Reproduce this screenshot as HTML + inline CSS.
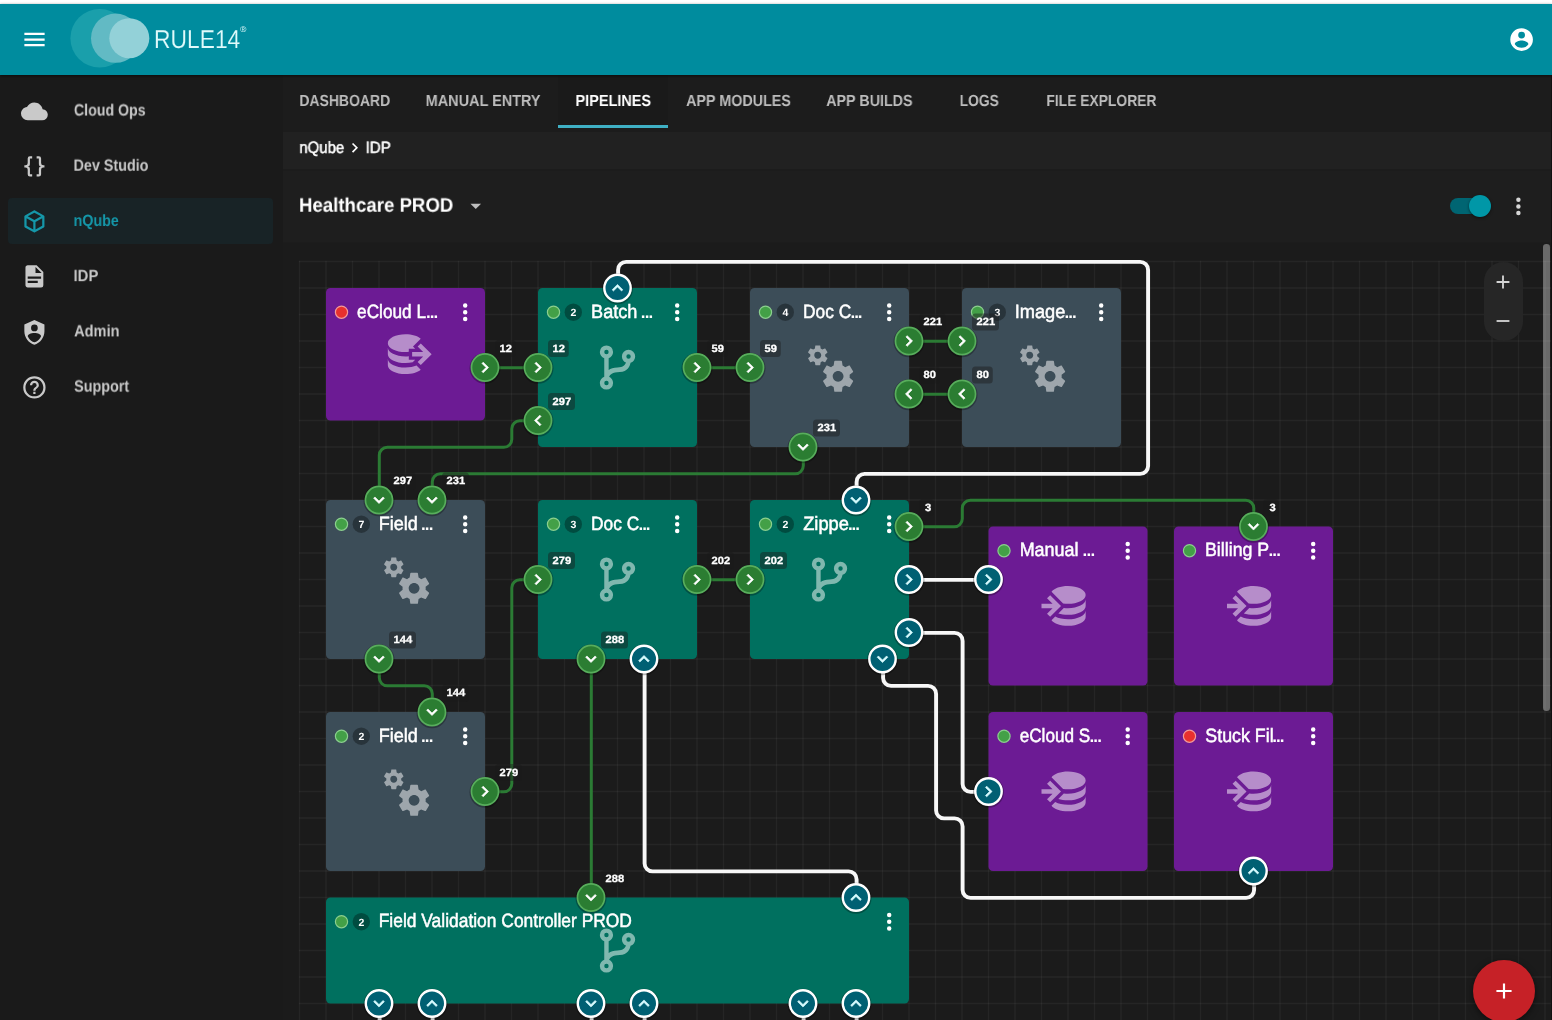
<!DOCTYPE html>
<html lang="en">
<head>
<meta charset="utf-8">
<title>RULE14 - nQube IDP Pipelines - Healthcare PROD</title>
<style>
html,body{margin:0;padding:0}
body{width:1552px;height:1020px;overflow:hidden;background:#fff;position:relative;font-family:"Liberation Sans",Arial,sans-serif;text-rendering:geometricPrecision;}
svg text{text-rendering:geometricPrecision}
*{box-sizing:border-box}
ul{list-style:none;margin:0;padding:0}
h1{margin:0}
.abs,.t,.ic{position:absolute}
.t{left:0;top:0;white-space:nowrap;transform-origin:0 0;display:block;will-change:transform}
.ic{display:block;overflow:visible;will-change:transform}
#app{position:absolute;left:0;top:0;width:1552px;height:1020px;overflow:hidden}
.topbar{left:0;top:4px;width:1552px;height:70.5px;background:#008c9e;box-shadow:0 1px 3px rgba(0,0,0,.6)}
.side-bg{left:0;top:74.5px;width:282.5px;height:945.5px;background:#1a1a1a}
.main-bg{left:282.5px;top:74.5px;width:1269.5px;height:945.5px;background:#1c1c1c}
.cv{position:absolute;left:282px;top:243px;will-change:transform}
header .abs,header .ic{z-index:6}
header .topbar{z-index:5}
</style>
</head>
<body>
<div id="app">
<aside>
<div class="abs side-bg"></div>
<nav aria-label="Main navigation"><ul>
<li>
<svg class="ic" style="left:20.9px;top:97.7px" width="26.8" height="26.8" viewBox="0 0 24 24" ><path fill="#c9c9c9" d="M19.35,10.03C18.67,6.59 15.64,4 12,4C9.11,4 6.6,5.64 5.35,8.03C2.34,8.36 0,10.9 0,14A6,6 0 0,0 6,20H19A5,5 0 0,0 24,15C24,12.36 21.95,10.22 19.35,10.03Z"/></svg>
<span class="t " style="font-size:16.4px;line-height:16.4px;color:#c9c9c9;font-weight:700;transform:translate(73.93px,102.52px) scaleX(0.8641);">Cloud Ops</span>
</li>
<li>
<svg class="ic" style="left:20.9px;top:152.92px" width="26.8" height="26.8" viewBox="0 0 24 24" ><path fill="#c9c9c9" d="M8,3A2,2 0 0,0 6,5V9A2,2 0 0,1 4,11H3V13H4A2,2 0 0,1 6,15V19A2,2 0 0,0 8,21H10V19H8V14A2,2 0 0,0 6,12A2,2 0 0,0 8,10V5H10V3M16,3A2,2 0 0,1 18,5V9A2,2 0 0,0 20,11H21V13H20A2,2 0 0,0 18,15V19A2,2 0 0,1 16,21H14V19H16V14A2,2 0 0,1 18,12A2,2 0 0,1 16,10V5H14V3H16Z"/></svg>
<span class="t " style="font-size:16.4px;line-height:16.4px;color:#c9c9c9;font-weight:700;transform:translate(73.57px,157.74px) scaleX(0.8750);">Dev Studio</span>
</li>
<li>
<div class="abs" style="left:7.7px;top:198px;width:265px;height:46.3px;border-radius:4px;background:#182326"></div>
<svg class="ic" style="left:20.9px;top:208.14px" width="26.8" height="26.8" viewBox="0 0 24 24" ><path fill="#1597a9" d="M21,16.5C21,16.88 20.79,17.21 20.47,17.38L12.57,21.82C12.41,21.94 12.21,22 12,22C11.79,22 11.59,21.94 11.43,21.82L3.53,17.38C3.21,17.21 3,16.88 3,16.5V7.5C3,7.12 3.21,6.79 3.53,6.62L11.43,2.18C11.59,2.06 11.79,2 12,2C12.21,2 12.41,2.06 12.57,2.18L20.47,6.62C20.79,6.79 21,7.12 21,7.5V16.5M12,4.15L6.04,7.5L12,10.85L17.96,7.5L12,4.15M5,15.91L11,19.29V12.58L5,9.21V15.91M19,15.91V9.21L13,12.58V19.29L19,15.91Z"/></svg>
<span class="t " style="font-size:16.4px;line-height:16.4px;color:#1597a9;font-weight:700;transform:translate(73.57px,212.96px) scaleX(0.8714);">nQube</span>
</li>
<li>
<svg class="ic" style="left:20.9px;top:263.36px" width="26.8" height="26.8" viewBox="0 0 24 24" ><path fill="#c9c9c9" d="M13,9H18.5L13,3.5V9M6,2H14L20,8V20A2,2 0 0,1 18,22H6C4.89,22 4,21.1 4,20V4C4,2.89 4.89,2 6,2M15,18V16H6V18H15M18,14V12H6V14H18Z"/></svg>
<span class="t " style="font-size:16.4px;line-height:16.4px;color:#c9c9c9;font-weight:700;transform:translate(73.54px,268.18px) scaleX(0.9049);">IDP</span>
</li>
<li>
<svg class="ic" style="left:20.9px;top:318.58px" width="26.8" height="26.8" viewBox="0 0 24 24" ><path fill="#c9c9c9" d="M12,1L3,5V11C3,16.55 6.84,21.74 12,23C17.16,21.74 21,16.55 21,11V5L12,1M12,5A3,3 0 0,1 15,8A3,3 0 0,1 12,11A3,3 0 0,1 9,8A3,3 0 0,1 12,5M17.13,17C15.92,18.85 14.11,20.24 12,20.92C9.89,20.24 8.08,18.85 6.87,17C6.53,16.5 6.24,16 6,15.47C6,13.82 8.71,12.47 12,12.47C15.29,12.47 18,13.79 18,15.47C17.76,16 17.47,16.5 17.13,17Z"/></svg>
<span class="t " style="font-size:16.4px;line-height:16.4px;color:#c9c9c9;font-weight:700;transform:translate(74.14px,323.4px) scaleX(0.8889);">Admin</span>
</li>
<li>
<svg class="ic" style="left:20.9px;top:373.8px" width="26.8" height="26.8" viewBox="0 0 24 24" ><path fill="#c9c9c9" d="M11,18H13V16H11V18M12,2A10,10 0 0,0 2,12A10,10 0 0,0 12,22A10,10 0 0,0 22,12A10,10 0 0,0 12,2M12,20C7.59,20 4,16.41 4,12C4,7.59 7.59,4 12,4C16.41,4 20,7.59 20,12C20,16.41 16.41,20 12,20M12,6A4,4 0 0,0 8,10H10A2,2 0 0,1 12,8A2,2 0 0,1 14,10C14,12 11,11.75 11,15H13C13,12.75 16,12.5 16,10A4,4 0 0,0 12,6Z"/></svg>
<span class="t " style="font-size:16.4px;line-height:16.4px;color:#c9c9c9;font-weight:700;transform:translate(74.07px,378.62px) scaleX(0.8768);">Support</span>
</li>
</ul></nav>
</aside>
<main>
<div class="abs main-bg"></div>
<nav aria-label="Sections">
<div class="abs" style="left:557.8px;top:74.5px;width:110.6px;height:53.7px;background:#1a1a1a"></div>
<div class="abs" style="left:557.8px;top:124.9px;width:110.6px;height:3.3px;background:#3fb0c4"></div>
<ul>
<li><span class="t " style="font-size:16.1px;line-height:16.1px;color:#bdbdbd;font-weight:700;transform:translate(299.39px,92.97px) scaleX(0.8683);">DASHBOARD</span></li>
<li><span class="t " style="font-size:16.1px;line-height:16.1px;color:#bdbdbd;font-weight:700;transform:translate(425.66px,92.97px) scaleX(0.8987);">MANUAL ENTRY</span></li>
<li><span class="t " style="font-size:16.1px;line-height:16.1px;color:#ffffff;font-weight:700;transform:translate(575.46px,92.97px) scaleX(0.9001);">PIPELINES</span></li>
<li><span class="t " style="font-size:16.1px;line-height:16.1px;color:#bdbdbd;font-weight:700;transform:translate(686.14px,92.97px) scaleX(0.8895);">APP MODULES</span></li>
<li><span class="t " style="font-size:16.1px;line-height:16.1px;color:#bdbdbd;font-weight:700;transform:translate(826.24px,92.97px) scaleX(0.8878);">APP BUILDS</span></li>
<li><span class="t " style="font-size:16.1px;line-height:16.1px;color:#bdbdbd;font-weight:700;transform:translate(959.7px,92.97px) scaleX(0.8600);">LOGS</span></li>
<li><span class="t " style="font-size:16.1px;line-height:16.1px;color:#bdbdbd;font-weight:700;transform:translate(1046.4px,92.97px) scaleX(0.8606);">FILE EXPLORER</span></li>
</ul></nav>
<div class="breadcrumb">
<div class="abs" style="left:282.5px;top:132px;width:1269.5px;height:37.3px;background:#212121"></div>
<span class="t " style="font-size:16.4px;line-height:16.4px;color:#fff;transform:translate(299.33px,139.92px) scaleX(0.9136);-webkit-text-stroke:0.5px #fff;">nQube</span>
<svg class="ic" style="left:344.65px;top:137.85px" width="19.5" height="19.5" viewBox="0 0 24 24" ><path fill="#fff" d="M8.59,16.58L13.17,12L8.59,7.41L10,6L16,12L10,18L8.59,16.58Z"/></svg>
<span class="t " style="font-size:16.4px;line-height:16.4px;color:#fff;transform:translate(365.64px,139.92px) scaleX(0.9196);-webkit-text-stroke:0.5px #fff;">IDP</span>
</div>
<section class="titlebar">
<div class="abs" style="left:282.5px;top:170.8px;width:1269.5px;height:71.7px;background:#1e1e1e"></div>
<h1 class="t " style="font-size:19.8px;line-height:19.8px;color:#fff;font-weight:700;transform:translate(298.99px,196.74px) scaleX(0.9421);">Healthcare PROD</h1>
<svg class="ic" style="left:462.85px;top:193.25px" width="25.5" height="25.5" viewBox="0 0 24 24" ><path fill="#bdbdbd" d="M7,10L12,15L17,10H7Z"/></svg>
<div class="abs" style="left:1450px;top:198.2px;width:38px;height:15.9px;border-radius:8px;background:#006572"></div>
<div class="abs" style="left:1469.1px;top:195.1px;width:22px;height:22px;border-radius:11px;background:#0097a7;box-shadow:0 1px 3px rgba(0,0,0,.5)"></div>
<svg class="ic" style="left:1505.3px;top:192.7px" width="26.8" height="26.8" viewBox="0 0 24 24" ><path fill="#d6d6d6" d="M12,16A2,2 0 0,1 14,18A2,2 0 0,1 12,20A2,2 0 0,1 10,18A2,2 0 0,1 12,16M12,10A2,2 0 0,1 14,12A2,2 0 0,1 12,14A2,2 0 0,1 10,12A2,2 0 0,1 12,10M12,4A2,2 0 0,1 14,6A2,2 0 0,1 12,8A2,2 0 0,1 10,6A2,2 0 0,1 12,4Z"/></svg>
</section>
<section class="canvas">
<div class="abs" style="left:282.5px;top:242.5px;width:1269.5px;height:777.5px;background:#1b1b1b"></div>
<svg class="cv" width="1270" height="777" viewBox="282 243 1270 777" font-family="'Liberation Sans', Arial, sans-serif">
<path fill="none" stroke="rgba(255,255,255,0.047)" stroke-width="1.4" d="M299.5 260.8V1021M326 260.8V1021M352.5 260.8V1021M379 260.8V1021M405.5 260.8V1021M432 260.8V1021M458.5 260.8V1021M485 260.8V1021M511.5 260.8V1021M538 260.8V1021M564.5 260.8V1021M591 260.8V1021M617.5 260.8V1021M644 260.8V1021M670.5 260.8V1021M697 260.8V1021M723.5 260.8V1021M750 260.8V1021M776.5 260.8V1021M803 260.8V1021M829.5 260.8V1021M856 260.8V1021M882.5 260.8V1021M909 260.8V1021M935.5 260.8V1021M962 260.8V1021M988.5 260.8V1021M1015 260.8V1021M1041.5 260.8V1021M1068 260.8V1021M1094.5 260.8V1021M1121 260.8V1021M1147.5 260.8V1021M1174 260.8V1021M1200.5 260.8V1021M1227 260.8V1021M1253.5 260.8V1021M1280 260.8V1021M1306.5 260.8V1021M1333 260.8V1021M1359.5 260.8V1021M1386 260.8V1021M1412.5 260.8V1021M1439 260.8V1021M1465.5 260.8V1021M1492 260.8V1021M1518.5 260.8V1021M1545 260.8V1021"/>
<path fill="none" stroke="rgba(255,255,255,0.047)" stroke-width="1.4" d="M298.8 261.5H1552M298.8 288H1552M298.8 314.5H1552M298.8 341H1552M298.8 367.5H1552M298.8 394H1552M298.8 420.5H1552M298.8 447H1552M298.8 473.5H1552M298.8 500H1552M298.8 526.5H1552M298.8 553H1552M298.8 579.5H1552M298.8 606H1552M298.8 632.5H1552M298.8 659H1552M298.8 685.5H1552M298.8 712H1552M298.8 738.5H1552M298.8 765H1552M298.8 791.5H1552M298.8 818H1552M298.8 844.5H1552M298.8 871H1552M298.8 897.5H1552M298.8 924H1552M298.8 950.5H1552M298.8 977H1552M298.8 1003.5H1552"/>
<g fill="none" stroke="#2b7b34" stroke-width="3" transform="translate(0.3 0.3)">
<path d="M485 367.5L538 367.5"/>
<path d="M697 367.5L750 367.5"/>
<path d="M909 341L962 341"/>
<path d="M909 394L962 394"/>
<path d="M538 420.5L519.5 420.5A8 8 0 0 0 511.5 428.5L511.5 439A8 8 0 0 1 503.5 447L387 447A8 8 0 0 0 379 455L379 500"/>
<path d="M803 447L803 465.5A8 8 0 0 1 795 473.5L440 473.5A8 8 0 0 0 432 481.5L432 500"/>
<path d="M379 659L379 677.5A8 8 0 0 0 387 685.5L424 685.5A8 8 0 0 1 432 693.5L432 712"/>
<path d="M485 791.5L503.5 791.5A8 8 0 0 0 511.5 783.5L511.5 587.5A8 8 0 0 1 519.5 579.5L538 579.5"/>
<path d="M697 579.5L750 579.5"/>
<path d="M591 659L591 897.5"/>
<path d="M909 526.5L954 526.5A8 8 0 0 0 962 518.5L962 508A8 8 0 0 1 970 500L1245.5 500A8 8 0 0 1 1253.5 508L1253.5 526.5"/>
</g>
<g fill="none" stroke="#f7f7f7" stroke-width="3.9" transform="translate(0.6 0.4)">
<path d="M617.5 288L617.5 269.5A8 8 0 0 1 625.5 261.5L1139.5 261.5A8 8 0 0 1 1147.5 269.5L1147.5 465.5A8 8 0 0 1 1139.5 473.5L864 473.5A8 8 0 0 0 856 481.5L856 500"/>
<path d="M644 659L644 863A8 8 0 0 0 652 871L848 871A8 8 0 0 1 856 879L856 897.5"/>
<path d="M909 579.5L988.5 579.5"/>
<path d="M909 632.5L954 632.5A8 8 0 0 1 962 640.5L962 783.5A8 8 0 0 0 970 791.5L988.5 791.5"/>
<path d="M882.5 659L882.5 677.5A8 8 0 0 0 890.5 685.5L927.5 685.5A8 8 0 0 1 935.5 693.5L935.5 810A8 8 0 0 0 943.5 818L954 818A8 8 0 0 1 962 826L962 889.5A8 8 0 0 0 970 897.5L1245.5 897.5A8 8 0 0 0 1253.5 889.5L1253.5 871"/>
<path d="M379 1003.5L379 1056.5"/>
<path d="M432 1003.5L432 1056.5"/>
<path d="M591 1003.5L591 1056.5"/>
<path d="M644 1003.5L644 1056.5"/>
<path d="M803 1003.5L803 1056.5"/>
<path d="M856 1003.5L856 1056.5"/>
</g>
<g>
<rect x="326" y="288" width="159" height="132.5" rx="4.5" fill="#6c1b94"/>
<path transform="translate(379 327.75) scale(2.2083)" fill="rgba(255,255,255,0.5)" d="M12,3C7.58,3 4,4.79 4,7C4,9.21 7.58,11 12,11C12.5,11 13,10.97 13.5,10.92V9.5H16.39L15.39,8.5L18.9,5C17.5,3.8 14.94,3 12,3M18.92,7.08L17.5,8.5L20,11H15V13H20L17.5,15.5L18.92,16.92L23.84,12L18.92,7.08M4,9V12C4,14.21 7.58,16 12,16C13.17,16 14.26,15.85 15.25,15.63L16.38,14.5H13.5V12.92C13,12.97 12.5,13 12,13C7.58,13 4,11.21 4,9M4,14V17C4,19.21 7.58,21 12,21C14.94,21 17.5,20.2 18.9,19L17,17.1C15.61,17.66 13.9,18 12,18C7.58,18 4,16.21 4,14Z"/>
<circle cx="341.5" cy="312.2" r="6.1" fill="#e8302e" stroke="#f59a98" stroke-width="1.2"/>
<text x="357.12" y="317.8" font-size="19.2" fill="#fff" textLength="68.94" lengthAdjust="spacingAndGlyphs" stroke="#fff" stroke-width="0.5">eCloud L</text>
<text x="425.91" y="317.8" font-size="17" font-weight="700" fill="#fff" letter-spacing="-0.96">...</text>
<path transform="translate(451.8 298.8) scale(1.1167)" fill="#fff" d="M12,16A2,2 0 0,1 14,18A2,2 0 0,1 12,20A2,2 0 0,1 10,18A2,2 0 0,1 12,16M12,10A2,2 0 0,1 14,12A2,2 0 0,1 12,14A2,2 0 0,1 10,12A2,2 0 0,1 12,10M12,4A2,2 0 0,1 14,6A2,2 0 0,1 12,8A2,2 0 0,1 10,6A2,2 0 0,1 12,4Z"/>
</g>
<g>
<rect x="538" y="288" width="159" height="159" rx="4.5" fill="#00705f"/>
<path transform="translate(591 341) scale(2.2083)" fill="rgba(255,255,255,0.5)" d="M13,14C9.64,14 8.54,15.35 8.18,16.24C9.25,16.7 10,17.76 10,19A3,3 0 0,1 7,22A3,3 0 0,1 4,19C4,17.69 4.83,16.58 6,16.17V7.83C4.83,7.42 4,6.31 4,5A3,3 0 0,1 7,2A3,3 0 0,1 10,5C10,6.31 9.17,7.42 8,7.83V13.12C8.88,12.47 10.16,12 12,12C14.67,12 15.56,10.66 15.85,9.77C14.77,9.32 14,8.25 14,7A3,3 0 0,1 17,4A3,3 0 0,1 20,7C20,8.34 19.12,9.5 17.91,9.86C17.65,11.29 16.68,14 13,14M7,18A1,1 0 0,0 6,19A1,1 0 0,0 7,20A1,1 0 0,0 8,19A1,1 0 0,0 7,18M7,4A1,1 0 0,0 6,5A1,1 0 0,0 7,6A1,1 0 0,0 8,5A1,1 0 0,0 7,4M17,6A1,1 0 0,0 16,7A1,1 0 0,0 17,8A1,1 0 0,0 18,7A1,1 0 0,0 17,6Z"/>
<circle cx="553.5" cy="312.2" r="6.1" fill="#43a047" stroke="#8bcf8e" stroke-width="1.2"/>
<circle cx="573.3" cy="312.2" r="8.7" fill="rgba(0,0,0,0.32)"/>
<text x="573.3" y="316.1" font-size="10.5" fill="#fff" font-weight="700" text-anchor="middle" >2</text>
<text x="591.05" y="317.8" font-size="19.2" fill="#fff" textLength="46.37" lengthAdjust="spacingAndGlyphs" stroke="#fff" stroke-width="0.5">Batch</text>
<text x="640.81" y="317.8" font-size="17" font-weight="700" fill="#fff" letter-spacing="-0.86">...</text>
<path transform="translate(663.8 298.8) scale(1.1167)" fill="#fff" d="M12,16A2,2 0 0,1 14,18A2,2 0 0,1 12,20A2,2 0 0,1 10,18A2,2 0 0,1 12,16M12,10A2,2 0 0,1 14,12A2,2 0 0,1 12,14A2,2 0 0,1 10,12A2,2 0 0,1 12,10M12,4A2,2 0 0,1 14,6A2,2 0 0,1 12,8A2,2 0 0,1 10,6A2,2 0 0,1 12,4Z"/>
</g>
<g>
<rect x="750" y="288" width="159" height="159" rx="4.5" fill="#3c4d58"/>
<path transform="translate(803 341) scale(2.2083)" fill="rgba(255,255,255,0.5)" d="M15.9,18.45C17.25,18.45 18.35,17.35 18.35,16C18.35,14.65 17.25,13.55 15.9,13.55C14.54,13.55 13.45,14.65 13.45,16C13.45,17.35 14.54,18.45 15.9,18.45M21.1,16.68L22.58,17.84C22.71,17.95 22.75,18.13 22.66,18.29L21.26,20.71C21.17,20.86 21,20.92 20.83,20.86L19.09,20.16C18.73,20.44 18.33,20.67 17.91,20.85L17.64,22.7C17.62,22.87 17.47,23 17.3,23H14.5C14.32,23 14.18,22.87 14.15,22.7L13.89,20.85C13.46,20.67 13.07,20.44 12.71,20.16L10.96,20.86C10.81,20.92 10.62,20.86 10.54,20.71L9.14,18.29C9.05,18.13 9.09,17.95 9.22,17.84L10.7,16.68L10.65,16L10.7,15.31L9.22,14.16C9.09,14.05 9.05,13.86 9.14,13.71L10.54,11.29C10.62,11.13 10.81,11.07 10.96,11.13L12.71,11.84C13.07,11.56 13.46,11.32 13.89,11.15L14.15,9.29C14.18,9.13 14.32,9 14.5,9H17.3C17.47,9 17.62,9.13 17.64,9.29L17.91,11.15C18.33,11.32 18.73,11.56 19.09,11.84L20.83,11.13C21,11.07 21.17,11.13 21.26,11.29L22.66,13.71C22.75,13.86 22.71,14.05 22.58,14.16L21.1,15.31L21.15,16L21.1,16.68M6.69,8.07C7.56,8.07 8.26,7.37 8.26,6.5C8.26,5.63 7.56,4.92 6.69,4.92A1.58,1.58 0 0,0 5.11,6.5C5.11,7.37 5.82,8.07 6.69,8.07M10.03,6.94L11,7.68C11.07,7.75 11.09,7.87 11.03,7.97L10.13,9.53C10.08,9.63 9.96,9.67 9.86,9.63L8.74,9.18L8,9.62L7.81,10.81C7.79,10.92 7.7,11 7.59,11H5.79C5.67,11 5.58,10.92 5.56,10.81L5.4,9.62L4.64,9.18L3.5,9.63C3.41,9.67 3.3,9.63 3.24,9.53L2.34,7.97C2.28,7.87 2.31,7.75 2.39,7.68L3.34,6.94L3.31,6.5L3.34,6.06L2.39,5.32C2.31,5.25 2.28,5.13 2.34,5.03L3.24,3.47C3.3,3.37 3.41,3.33 3.5,3.37L4.63,3.82L5.4,3.38L5.56,2.19C5.58,2.08 5.67,2 5.79,2H7.59C7.7,2 7.79,2.08 7.81,2.19L8,3.38L8.74,3.82L9.86,3.37C9.96,3.33 10.08,3.37 10.13,3.47L11.03,5.03C11.09,5.13 11.07,5.25 11,5.32L10.03,6.06L10.06,6.5L10.03,6.94Z"/>
<circle cx="765.5" cy="312.2" r="6.1" fill="#43a047" stroke="#8bcf8e" stroke-width="1.2"/>
<circle cx="785.3" cy="312.2" r="8.7" fill="rgba(0,0,0,0.32)"/>
<text x="785.3" y="316.1" font-size="10.5" fill="#fff" font-weight="700" text-anchor="middle" >4</text>
<text x="803.01" y="317.8" font-size="19.2" fill="#fff" textLength="48.14" lengthAdjust="spacingAndGlyphs" stroke="#fff" stroke-width="0.5">Doc C</text>
<text x="850.51" y="317.8" font-size="17" font-weight="700" fill="#fff" letter-spacing="-1.06">...</text>
<path transform="translate(875.8 298.8) scale(1.1167)" fill="#fff" d="M12,16A2,2 0 0,1 14,18A2,2 0 0,1 12,20A2,2 0 0,1 10,18A2,2 0 0,1 12,16M12,10A2,2 0 0,1 14,12A2,2 0 0,1 12,14A2,2 0 0,1 10,12A2,2 0 0,1 12,10M12,4A2,2 0 0,1 14,6A2,2 0 0,1 12,8A2,2 0 0,1 10,6A2,2 0 0,1 12,4Z"/>
</g>
<g>
<rect x="962" y="288" width="159" height="159" rx="4.5" fill="#3c4d58"/>
<path transform="translate(1015 341) scale(2.2083)" fill="rgba(255,255,255,0.5)" d="M15.9,18.45C17.25,18.45 18.35,17.35 18.35,16C18.35,14.65 17.25,13.55 15.9,13.55C14.54,13.55 13.45,14.65 13.45,16C13.45,17.35 14.54,18.45 15.9,18.45M21.1,16.68L22.58,17.84C22.71,17.95 22.75,18.13 22.66,18.29L21.26,20.71C21.17,20.86 21,20.92 20.83,20.86L19.09,20.16C18.73,20.44 18.33,20.67 17.91,20.85L17.64,22.7C17.62,22.87 17.47,23 17.3,23H14.5C14.32,23 14.18,22.87 14.15,22.7L13.89,20.85C13.46,20.67 13.07,20.44 12.71,20.16L10.96,20.86C10.81,20.92 10.62,20.86 10.54,20.71L9.14,18.29C9.05,18.13 9.09,17.95 9.22,17.84L10.7,16.68L10.65,16L10.7,15.31L9.22,14.16C9.09,14.05 9.05,13.86 9.14,13.71L10.54,11.29C10.62,11.13 10.81,11.07 10.96,11.13L12.71,11.84C13.07,11.56 13.46,11.32 13.89,11.15L14.15,9.29C14.18,9.13 14.32,9 14.5,9H17.3C17.47,9 17.62,9.13 17.64,9.29L17.91,11.15C18.33,11.32 18.73,11.56 19.09,11.84L20.83,11.13C21,11.07 21.17,11.13 21.26,11.29L22.66,13.71C22.75,13.86 22.71,14.05 22.58,14.16L21.1,15.31L21.15,16L21.1,16.68M6.69,8.07C7.56,8.07 8.26,7.37 8.26,6.5C8.26,5.63 7.56,4.92 6.69,4.92A1.58,1.58 0 0,0 5.11,6.5C5.11,7.37 5.82,8.07 6.69,8.07M10.03,6.94L11,7.68C11.07,7.75 11.09,7.87 11.03,7.97L10.13,9.53C10.08,9.63 9.96,9.67 9.86,9.63L8.74,9.18L8,9.62L7.81,10.81C7.79,10.92 7.7,11 7.59,11H5.79C5.67,11 5.58,10.92 5.56,10.81L5.4,9.62L4.64,9.18L3.5,9.63C3.41,9.67 3.3,9.63 3.24,9.53L2.34,7.97C2.28,7.87 2.31,7.75 2.39,7.68L3.34,6.94L3.31,6.5L3.34,6.06L2.39,5.32C2.31,5.25 2.28,5.13 2.34,5.03L3.24,3.47C3.3,3.37 3.41,3.33 3.5,3.37L4.63,3.82L5.4,3.38L5.56,2.19C5.58,2.08 5.67,2 5.79,2H7.59C7.7,2 7.79,2.08 7.81,2.19L8,3.38L8.74,3.82L9.86,3.37C9.96,3.33 10.08,3.37 10.13,3.47L11.03,5.03C11.09,5.13 11.07,5.25 11,5.32L10.03,6.06L10.06,6.5L10.03,6.94Z"/>
<circle cx="977.5" cy="312.2" r="6.1" fill="#43a047" stroke="#8bcf8e" stroke-width="1.2"/>
<circle cx="997.3" cy="312.2" r="8.7" fill="rgba(0,0,0,0.32)"/>
<text x="997.3" y="316.1" font-size="10.5" fill="#fff" font-weight="700" text-anchor="middle" >3</text>
<text x="1014.66" y="317.8" font-size="19.2" fill="#fff" textLength="50.65" lengthAdjust="spacingAndGlyphs" stroke="#fff" stroke-width="0.5">Image</text>
<text x="1064.61" y="317.8" font-size="17" font-weight="700" fill="#fff" letter-spacing="-1.01">...</text>
<path transform="translate(1087.8 298.8) scale(1.1167)" fill="#fff" d="M12,16A2,2 0 0,1 14,18A2,2 0 0,1 12,20A2,2 0 0,1 10,18A2,2 0 0,1 12,16M12,10A2,2 0 0,1 14,12A2,2 0 0,1 12,14A2,2 0 0,1 10,12A2,2 0 0,1 12,10M12,4A2,2 0 0,1 14,6A2,2 0 0,1 12,8A2,2 0 0,1 10,6A2,2 0 0,1 12,4Z"/>
</g>
<g>
<rect x="326" y="500" width="159" height="159" rx="4.5" fill="#3c4d58"/>
<path transform="translate(379 553) scale(2.2083)" fill="rgba(255,255,255,0.5)" d="M15.9,18.45C17.25,18.45 18.35,17.35 18.35,16C18.35,14.65 17.25,13.55 15.9,13.55C14.54,13.55 13.45,14.65 13.45,16C13.45,17.35 14.54,18.45 15.9,18.45M21.1,16.68L22.58,17.84C22.71,17.95 22.75,18.13 22.66,18.29L21.26,20.71C21.17,20.86 21,20.92 20.83,20.86L19.09,20.16C18.73,20.44 18.33,20.67 17.91,20.85L17.64,22.7C17.62,22.87 17.47,23 17.3,23H14.5C14.32,23 14.18,22.87 14.15,22.7L13.89,20.85C13.46,20.67 13.07,20.44 12.71,20.16L10.96,20.86C10.81,20.92 10.62,20.86 10.54,20.71L9.14,18.29C9.05,18.13 9.09,17.95 9.22,17.84L10.7,16.68L10.65,16L10.7,15.31L9.22,14.16C9.09,14.05 9.05,13.86 9.14,13.71L10.54,11.29C10.62,11.13 10.81,11.07 10.96,11.13L12.71,11.84C13.07,11.56 13.46,11.32 13.89,11.15L14.15,9.29C14.18,9.13 14.32,9 14.5,9H17.3C17.47,9 17.62,9.13 17.64,9.29L17.91,11.15C18.33,11.32 18.73,11.56 19.09,11.84L20.83,11.13C21,11.07 21.17,11.13 21.26,11.29L22.66,13.71C22.75,13.86 22.71,14.05 22.58,14.16L21.1,15.31L21.15,16L21.1,16.68M6.69,8.07C7.56,8.07 8.26,7.37 8.26,6.5C8.26,5.63 7.56,4.92 6.69,4.92A1.58,1.58 0 0,0 5.11,6.5C5.11,7.37 5.82,8.07 6.69,8.07M10.03,6.94L11,7.68C11.07,7.75 11.09,7.87 11.03,7.97L10.13,9.53C10.08,9.63 9.96,9.67 9.86,9.63L8.74,9.18L8,9.62L7.81,10.81C7.79,10.92 7.7,11 7.59,11H5.79C5.67,11 5.58,10.92 5.56,10.81L5.4,9.62L4.64,9.18L3.5,9.63C3.41,9.67 3.3,9.63 3.24,9.53L2.34,7.97C2.28,7.87 2.31,7.75 2.39,7.68L3.34,6.94L3.31,6.5L3.34,6.06L2.39,5.32C2.31,5.25 2.28,5.13 2.34,5.03L3.24,3.47C3.3,3.37 3.41,3.33 3.5,3.37L4.63,3.82L5.4,3.38L5.56,2.19C5.58,2.08 5.67,2 5.79,2H7.59C7.7,2 7.79,2.08 7.81,2.19L8,3.38L8.74,3.82L9.86,3.37C9.96,3.33 10.08,3.37 10.13,3.47L11.03,5.03C11.09,5.13 11.07,5.25 11,5.32L10.03,6.06L10.06,6.5L10.03,6.94Z"/>
<circle cx="341.5" cy="524.2" r="6.1" fill="#43a047" stroke="#8bcf8e" stroke-width="1.2"/>
<circle cx="361.3" cy="524.2" r="8.7" fill="rgba(0,0,0,0.32)"/>
<text x="361.3" y="528.1" font-size="10.5" fill="#fff" font-weight="700" text-anchor="middle" >7</text>
<text x="378.65" y="529.8" font-size="19.2" fill="#fff" textLength="39.17" lengthAdjust="spacingAndGlyphs" stroke="#fff" stroke-width="0.5">Field</text>
<text x="420.91" y="529.8" font-size="17" font-weight="700" fill="#fff" letter-spacing="-0.81">...</text>
<path transform="translate(451.8 510.8) scale(1.1167)" fill="#fff" d="M12,16A2,2 0 0,1 14,18A2,2 0 0,1 12,20A2,2 0 0,1 10,18A2,2 0 0,1 12,16M12,10A2,2 0 0,1 14,12A2,2 0 0,1 12,14A2,2 0 0,1 10,12A2,2 0 0,1 12,10M12,4A2,2 0 0,1 14,6A2,2 0 0,1 12,8A2,2 0 0,1 10,6A2,2 0 0,1 12,4Z"/>
</g>
<g>
<rect x="538" y="500" width="159" height="159" rx="4.5" fill="#00705f"/>
<path transform="translate(591 553) scale(2.2083)" fill="rgba(255,255,255,0.5)" d="M13,14C9.64,14 8.54,15.35 8.18,16.24C9.25,16.7 10,17.76 10,19A3,3 0 0,1 7,22A3,3 0 0,1 4,19C4,17.69 4.83,16.58 6,16.17V7.83C4.83,7.42 4,6.31 4,5A3,3 0 0,1 7,2A3,3 0 0,1 10,5C10,6.31 9.17,7.42 8,7.83V13.12C8.88,12.47 10.16,12 12,12C14.67,12 15.56,10.66 15.85,9.77C14.77,9.32 14,8.25 14,7A3,3 0 0,1 17,4A3,3 0 0,1 20,7C20,8.34 19.12,9.5 17.91,9.86C17.65,11.29 16.68,14 13,14M7,18A1,1 0 0,0 6,19A1,1 0 0,0 7,20A1,1 0 0,0 8,19A1,1 0 0,0 7,18M7,4A1,1 0 0,0 6,5A1,1 0 0,0 7,6A1,1 0 0,0 8,5A1,1 0 0,0 7,4M17,6A1,1 0 0,0 16,7A1,1 0 0,0 17,8A1,1 0 0,0 18,7A1,1 0 0,0 17,6Z"/>
<circle cx="553.5" cy="524.2" r="6.1" fill="#43a047" stroke="#8bcf8e" stroke-width="1.2"/>
<circle cx="573.3" cy="524.2" r="8.7" fill="rgba(0,0,0,0.32)"/>
<text x="573.3" y="528.1" font-size="10.5" fill="#fff" font-weight="700" text-anchor="middle" >3</text>
<text x="591.01" y="529.8" font-size="19.2" fill="#fff" textLength="48.14" lengthAdjust="spacingAndGlyphs" stroke="#fff" stroke-width="0.5">Doc C</text>
<text x="638.51" y="529.8" font-size="17" font-weight="700" fill="#fff" letter-spacing="-1.06">...</text>
<path transform="translate(663.8 510.8) scale(1.1167)" fill="#fff" d="M12,16A2,2 0 0,1 14,18A2,2 0 0,1 12,20A2,2 0 0,1 10,18A2,2 0 0,1 12,16M12,10A2,2 0 0,1 14,12A2,2 0 0,1 12,14A2,2 0 0,1 10,12A2,2 0 0,1 12,10M12,4A2,2 0 0,1 14,6A2,2 0 0,1 12,8A2,2 0 0,1 10,6A2,2 0 0,1 12,4Z"/>
</g>
<g>
<rect x="750" y="500" width="159" height="159" rx="4.5" fill="#00705f"/>
<path transform="translate(803 553) scale(2.2083)" fill="rgba(255,255,255,0.5)" d="M13,14C9.64,14 8.54,15.35 8.18,16.24C9.25,16.7 10,17.76 10,19A3,3 0 0,1 7,22A3,3 0 0,1 4,19C4,17.69 4.83,16.58 6,16.17V7.83C4.83,7.42 4,6.31 4,5A3,3 0 0,1 7,2A3,3 0 0,1 10,5C10,6.31 9.17,7.42 8,7.83V13.12C8.88,12.47 10.16,12 12,12C14.67,12 15.56,10.66 15.85,9.77C14.77,9.32 14,8.25 14,7A3,3 0 0,1 17,4A3,3 0 0,1 20,7C20,8.34 19.12,9.5 17.91,9.86C17.65,11.29 16.68,14 13,14M7,18A1,1 0 0,0 6,19A1,1 0 0,0 7,20A1,1 0 0,0 8,19A1,1 0 0,0 7,18M7,4A1,1 0 0,0 6,5A1,1 0 0,0 7,6A1,1 0 0,0 8,5A1,1 0 0,0 7,4M17,6A1,1 0 0,0 16,7A1,1 0 0,0 17,8A1,1 0 0,0 18,7A1,1 0 0,0 17,6Z"/>
<circle cx="765.5" cy="524.2" r="6.1" fill="#43a047" stroke="#8bcf8e" stroke-width="1.2"/>
<circle cx="785.3" cy="524.2" r="8.7" fill="rgba(0,0,0,0.32)"/>
<text x="785.3" y="528.1" font-size="10.5" fill="#fff" font-weight="700" text-anchor="middle" >2</text>
<text x="803.15" y="529.8" font-size="19.2" fill="#fff" textLength="45.8" lengthAdjust="spacingAndGlyphs" stroke="#fff" stroke-width="0.5">Zippe</text>
<text x="848.01" y="529.8" font-size="17" font-weight="700" fill="#fff" letter-spacing="-1.16">...</text>
<path transform="translate(875.8 510.8) scale(1.1167)" fill="#fff" d="M12,16A2,2 0 0,1 14,18A2,2 0 0,1 12,20A2,2 0 0,1 10,18A2,2 0 0,1 12,16M12,10A2,2 0 0,1 14,12A2,2 0 0,1 12,14A2,2 0 0,1 10,12A2,2 0 0,1 12,10M12,4A2,2 0 0,1 14,6A2,2 0 0,1 12,8A2,2 0 0,1 10,6A2,2 0 0,1 12,4Z"/>
</g>
<g>
<rect x="988.5" y="526.5" width="159" height="159" rx="4.5" fill="#6c1b94"/>
<path transform="translate(1041.5 579.5) scale(2.2083)" fill="rgba(255,255,255,0.5)" d="M12,3C8.59,3 5.69,4.07 4.54,5.57L9.79,10.82C10.5,10.93 11.22,11 12,11C16.42,11 20,9.21 20,7C20,4.79 16.42,3 12,3M3.92,7.08L2.5,8.5L5,11H0V13H5L2.5,15.5L3.92,16.92L8.84,12L3.92,7.08M20,9C20,11.21 16.42,13 12,13C11.34,13 10.7,12.95 10.09,12.87L7.62,15.34C8.88,15.75 10.38,16 12,16C16.42,16 20,14.21 20,12V9M20,14C20,16.21 16.42,18 12,18C9.72,18 7.67,17.5 6.21,16.75L4.53,18.43C5.68,19.93 8.59,21 12,21C16.42,21 20,19.21 20,17V14Z"/>
<circle cx="1004" cy="550.7" r="6.1" fill="#43a047" stroke="#8bcf8e" stroke-width="1.2"/>
<text x="1019.66" y="556.3" font-size="19.2" fill="#fff" textLength="58.9" lengthAdjust="spacingAndGlyphs" stroke="#fff" stroke-width="0.5">Manual</text>
<text x="1082.41" y="556.3" font-size="17" font-weight="700" fill="#fff" letter-spacing="-0.71">...</text>
<path transform="translate(1114.3 537.3) scale(1.1167)" fill="#fff" d="M12,16A2,2 0 0,1 14,18A2,2 0 0,1 12,20A2,2 0 0,1 10,18A2,2 0 0,1 12,16M12,10A2,2 0 0,1 14,12A2,2 0 0,1 12,14A2,2 0 0,1 10,12A2,2 0 0,1 12,10M12,4A2,2 0 0,1 14,6A2,2 0 0,1 12,8A2,2 0 0,1 10,6A2,2 0 0,1 12,4Z"/>
</g>
<g>
<rect x="1174" y="526.5" width="159" height="159" rx="4.5" fill="#6c1b94"/>
<path transform="translate(1227 579.5) scale(2.2083)" fill="rgba(255,255,255,0.5)" d="M12,3C8.59,3 5.69,4.07 4.54,5.57L9.79,10.82C10.5,10.93 11.22,11 12,11C16.42,11 20,9.21 20,7C20,4.79 16.42,3 12,3M3.92,7.08L2.5,8.5L5,11H0V13H5L2.5,15.5L3.92,16.92L8.84,12L3.92,7.08M20,9C20,11.21 16.42,13 12,13C11.34,13 10.7,12.95 10.09,12.87L7.62,15.34C8.88,15.75 10.38,16 12,16C16.42,16 20,14.21 20,12V9M20,14C20,16.21 16.42,18 12,18C9.72,18 7.67,17.5 6.21,16.75L4.53,18.43C5.68,19.93 8.59,21 12,21C16.42,21 20,19.21 20,17V14Z"/>
<circle cx="1189.5" cy="550.7" r="6.1" fill="#43a047" stroke="#8bcf8e" stroke-width="1.2"/>
<text x="1204.98" y="556.3" font-size="19.2" fill="#fff" textLength="64.27" lengthAdjust="spacingAndGlyphs" stroke="#fff" stroke-width="0.5">Billing P</text>
<text x="1268.41" y="556.3" font-size="17" font-weight="700" fill="#fff" letter-spacing="-0.86">...</text>
<path transform="translate(1299.8 537.3) scale(1.1167)" fill="#fff" d="M12,16A2,2 0 0,1 14,18A2,2 0 0,1 12,20A2,2 0 0,1 10,18A2,2 0 0,1 12,16M12,10A2,2 0 0,1 14,12A2,2 0 0,1 12,14A2,2 0 0,1 10,12A2,2 0 0,1 12,10M12,4A2,2 0 0,1 14,6A2,2 0 0,1 12,8A2,2 0 0,1 10,6A2,2 0 0,1 12,4Z"/>
</g>
<g>
<rect x="988.5" y="712" width="159" height="159" rx="4.5" fill="#6c1b94"/>
<path transform="translate(1041.5 765) scale(2.2083)" fill="rgba(255,255,255,0.5)" d="M12,3C8.59,3 5.69,4.07 4.54,5.57L9.79,10.82C10.5,10.93 11.22,11 12,11C16.42,11 20,9.21 20,7C20,4.79 16.42,3 12,3M3.92,7.08L2.5,8.5L5,11H0V13H5L2.5,15.5L3.92,16.92L8.84,12L3.92,7.08M20,9C20,11.21 16.42,13 12,13C11.34,13 10.7,12.95 10.09,12.87L7.62,15.34C8.88,15.75 10.38,16 12,16C16.42,16 20,14.21 20,12V9M20,14C20,16.21 16.42,18 12,18C9.72,18 7.67,17.5 6.21,16.75L4.53,18.43C5.68,19.93 8.59,21 12,21C16.42,21 20,19.21 20,17V14Z"/>
<circle cx="1004" cy="736.2" r="6.1" fill="#43a047" stroke="#8bcf8e" stroke-width="1.2"/>
<text x="1019.63" y="741.8" font-size="19.2" fill="#fff" textLength="70.61" lengthAdjust="spacingAndGlyphs" stroke="#fff" stroke-width="0.5">eCloud S</text>
<text x="1089.51" y="741.8" font-size="17" font-weight="700" fill="#fff" letter-spacing="-0.86">...</text>
<path transform="translate(1114.3 722.8) scale(1.1167)" fill="#fff" d="M12,16A2,2 0 0,1 14,18A2,2 0 0,1 12,20A2,2 0 0,1 10,18A2,2 0 0,1 12,16M12,10A2,2 0 0,1 14,12A2,2 0 0,1 12,14A2,2 0 0,1 10,12A2,2 0 0,1 12,10M12,4A2,2 0 0,1 14,6A2,2 0 0,1 12,8A2,2 0 0,1 10,6A2,2 0 0,1 12,4Z"/>
</g>
<g>
<rect x="1174" y="712" width="159" height="159" rx="4.5" fill="#6c1b94"/>
<path transform="translate(1227 765) scale(2.2083)" fill="rgba(255,255,255,0.5)" d="M12,3C8.59,3 5.69,4.07 4.54,5.57L9.79,10.82C10.5,10.93 11.22,11 12,11C16.42,11 20,9.21 20,7C20,4.79 16.42,3 12,3M3.92,7.08L2.5,8.5L5,11H0V13H5L2.5,15.5L3.92,16.92L8.84,12L3.92,7.08M20,9C20,11.21 16.42,13 12,13C11.34,13 10.7,12.95 10.09,12.87L7.62,15.34C8.88,15.75 10.38,16 12,16C16.42,16 20,14.21 20,12V9M20,14C20,16.21 16.42,18 12,18C9.72,18 7.67,17.5 6.21,16.75L4.53,18.43C5.68,19.93 8.59,21 12,21C16.42,21 20,19.21 20,17V14Z"/>
<circle cx="1189.5" cy="736.2" r="6.1" fill="#e8302e" stroke="#f59a98" stroke-width="1.2"/>
<text x="1205.3" y="741.8" font-size="19.2" fill="#fff" textLength="68.33" lengthAdjust="spacingAndGlyphs" stroke="#fff" stroke-width="0.5">Stuck Fil</text>
<text x="1272.31" y="741.8" font-size="17" font-weight="700" fill="#fff" letter-spacing="-1.01">...</text>
<path transform="translate(1299.8 722.8) scale(1.1167)" fill="#fff" d="M12,16A2,2 0 0,1 14,18A2,2 0 0,1 12,20A2,2 0 0,1 10,18A2,2 0 0,1 12,16M12,10A2,2 0 0,1 14,12A2,2 0 0,1 12,14A2,2 0 0,1 10,12A2,2 0 0,1 12,10M12,4A2,2 0 0,1 14,6A2,2 0 0,1 12,8A2,2 0 0,1 10,6A2,2 0 0,1 12,4Z"/>
</g>
<g>
<rect x="326" y="712" width="159" height="159" rx="4.5" fill="#3c4d58"/>
<path transform="translate(379 765) scale(2.2083)" fill="rgba(255,255,255,0.5)" d="M15.9,18.45C17.25,18.45 18.35,17.35 18.35,16C18.35,14.65 17.25,13.55 15.9,13.55C14.54,13.55 13.45,14.65 13.45,16C13.45,17.35 14.54,18.45 15.9,18.45M21.1,16.68L22.58,17.84C22.71,17.95 22.75,18.13 22.66,18.29L21.26,20.71C21.17,20.86 21,20.92 20.83,20.86L19.09,20.16C18.73,20.44 18.33,20.67 17.91,20.85L17.64,22.7C17.62,22.87 17.47,23 17.3,23H14.5C14.32,23 14.18,22.87 14.15,22.7L13.89,20.85C13.46,20.67 13.07,20.44 12.71,20.16L10.96,20.86C10.81,20.92 10.62,20.86 10.54,20.71L9.14,18.29C9.05,18.13 9.09,17.95 9.22,17.84L10.7,16.68L10.65,16L10.7,15.31L9.22,14.16C9.09,14.05 9.05,13.86 9.14,13.71L10.54,11.29C10.62,11.13 10.81,11.07 10.96,11.13L12.71,11.84C13.07,11.56 13.46,11.32 13.89,11.15L14.15,9.29C14.18,9.13 14.32,9 14.5,9H17.3C17.47,9 17.62,9.13 17.64,9.29L17.91,11.15C18.33,11.32 18.73,11.56 19.09,11.84L20.83,11.13C21,11.07 21.17,11.13 21.26,11.29L22.66,13.71C22.75,13.86 22.71,14.05 22.58,14.16L21.1,15.31L21.15,16L21.1,16.68M6.69,8.07C7.56,8.07 8.26,7.37 8.26,6.5C8.26,5.63 7.56,4.92 6.69,4.92A1.58,1.58 0 0,0 5.11,6.5C5.11,7.37 5.82,8.07 6.69,8.07M10.03,6.94L11,7.68C11.07,7.75 11.09,7.87 11.03,7.97L10.13,9.53C10.08,9.63 9.96,9.67 9.86,9.63L8.74,9.18L8,9.62L7.81,10.81C7.79,10.92 7.7,11 7.59,11H5.79C5.67,11 5.58,10.92 5.56,10.81L5.4,9.62L4.64,9.18L3.5,9.63C3.41,9.67 3.3,9.63 3.24,9.53L2.34,7.97C2.28,7.87 2.31,7.75 2.39,7.68L3.34,6.94L3.31,6.5L3.34,6.06L2.39,5.32C2.31,5.25 2.28,5.13 2.34,5.03L3.24,3.47C3.3,3.37 3.41,3.33 3.5,3.37L4.63,3.82L5.4,3.38L5.56,2.19C5.58,2.08 5.67,2 5.79,2H7.59C7.7,2 7.79,2.08 7.81,2.19L8,3.38L8.74,3.82L9.86,3.37C9.96,3.33 10.08,3.37 10.13,3.47L11.03,5.03C11.09,5.13 11.07,5.25 11,5.32L10.03,6.06L10.06,6.5L10.03,6.94Z"/>
<circle cx="341.5" cy="736.2" r="6.1" fill="#43a047" stroke="#8bcf8e" stroke-width="1.2"/>
<circle cx="361.3" cy="736.2" r="8.7" fill="rgba(0,0,0,0.32)"/>
<text x="361.3" y="740.1" font-size="10.5" fill="#fff" font-weight="700" text-anchor="middle" >2</text>
<text x="378.65" y="741.8" font-size="19.2" fill="#fff" textLength="39.17" lengthAdjust="spacingAndGlyphs" stroke="#fff" stroke-width="0.5">Field</text>
<text x="420.91" y="741.8" font-size="17" font-weight="700" fill="#fff" letter-spacing="-0.81">...</text>
<path transform="translate(451.8 722.8) scale(1.1167)" fill="#fff" d="M12,16A2,2 0 0,1 14,18A2,2 0 0,1 12,20A2,2 0 0,1 10,18A2,2 0 0,1 12,16M12,10A2,2 0 0,1 14,12A2,2 0 0,1 12,14A2,2 0 0,1 10,12A2,2 0 0,1 12,10M12,4A2,2 0 0,1 14,6A2,2 0 0,1 12,8A2,2 0 0,1 10,6A2,2 0 0,1 12,4Z"/>
</g>
<g>
<rect x="326" y="897.5" width="583" height="106" rx="4.5" fill="#00705f"/>
<path transform="translate(591 924) scale(2.2083)" fill="rgba(255,255,255,0.5)" d="M13,14C9.64,14 8.54,15.35 8.18,16.24C9.25,16.7 10,17.76 10,19A3,3 0 0,1 7,22A3,3 0 0,1 4,19C4,17.69 4.83,16.58 6,16.17V7.83C4.83,7.42 4,6.31 4,5A3,3 0 0,1 7,2A3,3 0 0,1 10,5C10,6.31 9.17,7.42 8,7.83V13.12C8.88,12.47 10.16,12 12,12C14.67,12 15.56,10.66 15.85,9.77C14.77,9.32 14,8.25 14,7A3,3 0 0,1 17,4A3,3 0 0,1 20,7C20,8.34 19.12,9.5 17.91,9.86C17.65,11.29 16.68,14 13,14M7,18A1,1 0 0,0 6,19A1,1 0 0,0 7,20A1,1 0 0,0 8,19A1,1 0 0,0 7,18M7,4A1,1 0 0,0 6,5A1,1 0 0,0 7,6A1,1 0 0,0 8,5A1,1 0 0,0 7,4M17,6A1,1 0 0,0 16,7A1,1 0 0,0 17,8A1,1 0 0,0 18,7A1,1 0 0,0 17,6Z"/>
<circle cx="341.5" cy="921.7" r="6.1" fill="#43a047" stroke="#8bcf8e" stroke-width="1.2"/>
<circle cx="361.3" cy="921.7" r="8.7" fill="rgba(0,0,0,0.32)"/>
<text x="361.3" y="925.6" font-size="10.5" fill="#fff" font-weight="700" text-anchor="middle" >2</text>
<text x="378.71" y="927.3" font-size="19.2" fill="#fff" textLength="253.24" lengthAdjust="spacingAndGlyphs" stroke="#fff" stroke-width="0.5">Field Validation Controller PROD</text>
<path transform="translate(875.8 908.3) scale(1.1167)" fill="#fff" d="M12,16A2,2 0 0,1 14,18A2,2 0 0,1 12,20A2,2 0 0,1 10,18A2,2 0 0,1 12,16M12,10A2,2 0 0,1 14,12A2,2 0 0,1 12,14A2,2 0 0,1 10,12A2,2 0 0,1 12,10M12,4A2,2 0 0,1 14,6A2,2 0 0,1 12,8A2,2 0 0,1 10,6A2,2 0 0,1 12,4Z"/>
</g>
<circle cx="485" cy="368.3" r="15.5" fill="rgba(0,0,0,0.28)"/>
<circle cx="485" cy="367.5" r="13.55" fill="#2b7d32" stroke="#58ae5c" stroke-width="1.7"/>
<path transform="translate(474.3 356.8) scale(0.8917)" fill="#fff" stroke="#fff" stroke-width="0.7" stroke-linejoin="miter" d="M8.59,16.58L13.17,12L8.59,7.41L10,6L16,12L10,18L8.59,16.58Z"/>
<circle cx="538" cy="368.3" r="15.5" fill="rgba(0,0,0,0.28)"/>
<circle cx="538" cy="367.5" r="13.55" fill="#2b7d32" stroke="#58ae5c" stroke-width="1.7"/>
<path transform="translate(527.3 356.8) scale(0.8917)" fill="#fff" stroke="#fff" stroke-width="0.7" stroke-linejoin="miter" d="M8.59,16.58L13.17,12L8.59,7.41L10,6L16,12L10,18L8.59,16.58Z"/>
<circle cx="538" cy="421.3" r="15.5" fill="rgba(0,0,0,0.28)"/>
<circle cx="538" cy="420.5" r="13.55" fill="#2b7d32" stroke="#58ae5c" stroke-width="1.7"/>
<path transform="translate(527.3 409.8) scale(0.8917)" fill="#fff" stroke="#fff" stroke-width="0.7" stroke-linejoin="miter" d="M15.41,16.58L10.83,12L15.41,7.41L14,6L8,12L14,18L15.41,16.58Z"/>
<circle cx="697" cy="368.3" r="15.5" fill="rgba(0,0,0,0.28)"/>
<circle cx="697" cy="367.5" r="13.55" fill="#2b7d32" stroke="#58ae5c" stroke-width="1.7"/>
<path transform="translate(686.3 356.8) scale(0.8917)" fill="#fff" stroke="#fff" stroke-width="0.7" stroke-linejoin="miter" d="M8.59,16.58L13.17,12L8.59,7.41L10,6L16,12L10,18L8.59,16.58Z"/>
<circle cx="750" cy="368.3" r="15.5" fill="rgba(0,0,0,0.28)"/>
<circle cx="750" cy="367.5" r="13.55" fill="#2b7d32" stroke="#58ae5c" stroke-width="1.7"/>
<path transform="translate(739.3 356.8) scale(0.8917)" fill="#fff" stroke="#fff" stroke-width="0.7" stroke-linejoin="miter" d="M8.59,16.58L13.17,12L8.59,7.41L10,6L16,12L10,18L8.59,16.58Z"/>
<circle cx="909" cy="341.8" r="15.5" fill="rgba(0,0,0,0.28)"/>
<circle cx="909" cy="341" r="13.55" fill="#2b7d32" stroke="#58ae5c" stroke-width="1.7"/>
<path transform="translate(898.3 330.3) scale(0.8917)" fill="#fff" stroke="#fff" stroke-width="0.7" stroke-linejoin="miter" d="M8.59,16.58L13.17,12L8.59,7.41L10,6L16,12L10,18L8.59,16.58Z"/>
<circle cx="962" cy="341.8" r="15.5" fill="rgba(0,0,0,0.28)"/>
<circle cx="962" cy="341" r="13.55" fill="#2b7d32" stroke="#58ae5c" stroke-width="1.7"/>
<path transform="translate(951.3 330.3) scale(0.8917)" fill="#fff" stroke="#fff" stroke-width="0.7" stroke-linejoin="miter" d="M8.59,16.58L13.17,12L8.59,7.41L10,6L16,12L10,18L8.59,16.58Z"/>
<circle cx="909" cy="394.8" r="15.5" fill="rgba(0,0,0,0.28)"/>
<circle cx="909" cy="394" r="13.55" fill="#2b7d32" stroke="#58ae5c" stroke-width="1.7"/>
<path transform="translate(898.3 383.3) scale(0.8917)" fill="#fff" stroke="#fff" stroke-width="0.7" stroke-linejoin="miter" d="M15.41,16.58L10.83,12L15.41,7.41L14,6L8,12L14,18L15.41,16.58Z"/>
<circle cx="962" cy="394.8" r="15.5" fill="rgba(0,0,0,0.28)"/>
<circle cx="962" cy="394" r="13.55" fill="#2b7d32" stroke="#58ae5c" stroke-width="1.7"/>
<path transform="translate(951.3 383.3) scale(0.8917)" fill="#fff" stroke="#fff" stroke-width="0.7" stroke-linejoin="miter" d="M15.41,16.58L10.83,12L15.41,7.41L14,6L8,12L14,18L15.41,16.58Z"/>
<circle cx="803" cy="447.8" r="15.5" fill="rgba(0,0,0,0.28)"/>
<circle cx="803" cy="447" r="13.55" fill="#2b7d32" stroke="#58ae5c" stroke-width="1.7"/>
<path transform="translate(792.3 436.3) scale(0.8917)" fill="#fff" stroke="#fff" stroke-width="0.7" stroke-linejoin="miter" d="M7.41,8.58L12,13.17L16.59,8.58L18,10L12,16L6,10L7.41,8.58Z"/>
<circle cx="379" cy="500.8" r="15.5" fill="rgba(0,0,0,0.28)"/>
<circle cx="379" cy="500" r="13.55" fill="#2b7d32" stroke="#58ae5c" stroke-width="1.7"/>
<path transform="translate(368.3 489.3) scale(0.8917)" fill="#fff" stroke="#fff" stroke-width="0.7" stroke-linejoin="miter" d="M7.41,8.58L12,13.17L16.59,8.58L18,10L12,16L6,10L7.41,8.58Z"/>
<circle cx="432" cy="500.8" r="15.5" fill="rgba(0,0,0,0.28)"/>
<circle cx="432" cy="500" r="13.55" fill="#2b7d32" stroke="#58ae5c" stroke-width="1.7"/>
<path transform="translate(421.3 489.3) scale(0.8917)" fill="#fff" stroke="#fff" stroke-width="0.7" stroke-linejoin="miter" d="M7.41,8.58L12,13.17L16.59,8.58L18,10L12,16L6,10L7.41,8.58Z"/>
<circle cx="379" cy="659.8" r="15.5" fill="rgba(0,0,0,0.28)"/>
<circle cx="379" cy="659" r="13.55" fill="#2b7d32" stroke="#58ae5c" stroke-width="1.7"/>
<path transform="translate(368.3 648.3) scale(0.8917)" fill="#fff" stroke="#fff" stroke-width="0.7" stroke-linejoin="miter" d="M7.41,8.58L12,13.17L16.59,8.58L18,10L12,16L6,10L7.41,8.58Z"/>
<circle cx="432" cy="712.8" r="15.5" fill="rgba(0,0,0,0.28)"/>
<circle cx="432" cy="712" r="13.55" fill="#2b7d32" stroke="#58ae5c" stroke-width="1.7"/>
<path transform="translate(421.3 701.3) scale(0.8917)" fill="#fff" stroke="#fff" stroke-width="0.7" stroke-linejoin="miter" d="M7.41,8.58L12,13.17L16.59,8.58L18,10L12,16L6,10L7.41,8.58Z"/>
<circle cx="538" cy="580.3" r="15.5" fill="rgba(0,0,0,0.28)"/>
<circle cx="538" cy="579.5" r="13.55" fill="#2b7d32" stroke="#58ae5c" stroke-width="1.7"/>
<path transform="translate(527.3 568.8) scale(0.8917)" fill="#fff" stroke="#fff" stroke-width="0.7" stroke-linejoin="miter" d="M8.59,16.58L13.17,12L8.59,7.41L10,6L16,12L10,18L8.59,16.58Z"/>
<circle cx="697" cy="580.3" r="15.5" fill="rgba(0,0,0,0.28)"/>
<circle cx="697" cy="579.5" r="13.55" fill="#2b7d32" stroke="#58ae5c" stroke-width="1.7"/>
<path transform="translate(686.3 568.8) scale(0.8917)" fill="#fff" stroke="#fff" stroke-width="0.7" stroke-linejoin="miter" d="M8.59,16.58L13.17,12L8.59,7.41L10,6L16,12L10,18L8.59,16.58Z"/>
<circle cx="750" cy="580.3" r="15.5" fill="rgba(0,0,0,0.28)"/>
<circle cx="750" cy="579.5" r="13.55" fill="#2b7d32" stroke="#58ae5c" stroke-width="1.7"/>
<path transform="translate(739.3 568.8) scale(0.8917)" fill="#fff" stroke="#fff" stroke-width="0.7" stroke-linejoin="miter" d="M8.59,16.58L13.17,12L8.59,7.41L10,6L16,12L10,18L8.59,16.58Z"/>
<circle cx="591" cy="659.8" r="15.5" fill="rgba(0,0,0,0.28)"/>
<circle cx="591" cy="659" r="13.55" fill="#2b7d32" stroke="#58ae5c" stroke-width="1.7"/>
<path transform="translate(580.3 648.3) scale(0.8917)" fill="#fff" stroke="#fff" stroke-width="0.7" stroke-linejoin="miter" d="M7.41,8.58L12,13.17L16.59,8.58L18,10L12,16L6,10L7.41,8.58Z"/>
<circle cx="485" cy="792.3" r="15.5" fill="rgba(0,0,0,0.28)"/>
<circle cx="485" cy="791.5" r="13.55" fill="#2b7d32" stroke="#58ae5c" stroke-width="1.7"/>
<path transform="translate(474.3 780.8) scale(0.8917)" fill="#fff" stroke="#fff" stroke-width="0.7" stroke-linejoin="miter" d="M8.59,16.58L13.17,12L8.59,7.41L10,6L16,12L10,18L8.59,16.58Z"/>
<circle cx="591" cy="898.3" r="15.5" fill="rgba(0,0,0,0.28)"/>
<circle cx="591" cy="897.5" r="13.55" fill="#2b7d32" stroke="#58ae5c" stroke-width="1.7"/>
<path transform="translate(580.3 886.8) scale(0.8917)" fill="#fff" stroke="#fff" stroke-width="0.7" stroke-linejoin="miter" d="M7.41,8.58L12,13.17L16.59,8.58L18,10L12,16L6,10L7.41,8.58Z"/>
<circle cx="909" cy="527.3" r="15.5" fill="rgba(0,0,0,0.28)"/>
<circle cx="909" cy="526.5" r="13.55" fill="#2b7d32" stroke="#58ae5c" stroke-width="1.7"/>
<path transform="translate(898.3 515.8) scale(0.8917)" fill="#fff" stroke="#fff" stroke-width="0.7" stroke-linejoin="miter" d="M8.59,16.58L13.17,12L8.59,7.41L10,6L16,12L10,18L8.59,16.58Z"/>
<circle cx="1253.5" cy="527.3" r="15.5" fill="rgba(0,0,0,0.28)"/>
<circle cx="1253.5" cy="526.5" r="13.55" fill="#2b7d32" stroke="#58ae5c" stroke-width="1.7"/>
<path transform="translate(1242.8 515.8) scale(0.8917)" fill="#fff" stroke="#fff" stroke-width="0.7" stroke-linejoin="miter" d="M7.41,8.58L12,13.17L16.59,8.58L18,10L12,16L6,10L7.41,8.58Z"/>
<circle cx="617.5" cy="288.8" r="15.5" fill="rgba(0,0,0,0.28)"/>
<circle cx="617.5" cy="288" r="13.2" fill="#006073" stroke="#fff" stroke-width="2.4"/>
<path transform="translate(606.8 277.3) scale(0.8917)" fill="#d8fbff" stroke="#d8fbff" stroke-width="0.7" stroke-linejoin="miter" d="M7.41,15.41L12,10.83L16.59,15.41L18,14L12,8L6,14L7.41,15.41Z"/>
<circle cx="856" cy="500.8" r="15.5" fill="rgba(0,0,0,0.28)"/>
<circle cx="856" cy="500" r="13.2" fill="#006073" stroke="#fff" stroke-width="2.4"/>
<path transform="translate(845.3 489.3) scale(0.8917)" fill="#d8fbff" stroke="#d8fbff" stroke-width="0.7" stroke-linejoin="miter" d="M7.41,8.58L12,13.17L16.59,8.58L18,10L12,16L6,10L7.41,8.58Z"/>
<circle cx="644" cy="659.8" r="15.5" fill="rgba(0,0,0,0.28)"/>
<circle cx="644" cy="659" r="13.2" fill="#006073" stroke="#fff" stroke-width="2.4"/>
<path transform="translate(633.3 648.3) scale(0.8917)" fill="#d8fbff" stroke="#d8fbff" stroke-width="0.7" stroke-linejoin="miter" d="M7.41,15.41L12,10.83L16.59,15.41L18,14L12,8L6,14L7.41,15.41Z"/>
<circle cx="909" cy="580.3" r="15.5" fill="rgba(0,0,0,0.28)"/>
<circle cx="909" cy="579.5" r="13.2" fill="#006073" stroke="#fff" stroke-width="2.4"/>
<path transform="translate(898.3 568.8) scale(0.8917)" fill="#d8fbff" stroke="#d8fbff" stroke-width="0.7" stroke-linejoin="miter" d="M8.59,16.58L13.17,12L8.59,7.41L10,6L16,12L10,18L8.59,16.58Z"/>
<circle cx="988.5" cy="580.3" r="15.5" fill="rgba(0,0,0,0.28)"/>
<circle cx="988.5" cy="579.5" r="13.2" fill="#006073" stroke="#fff" stroke-width="2.4"/>
<path transform="translate(977.8 568.8) scale(0.8917)" fill="#d8fbff" stroke="#d8fbff" stroke-width="0.7" stroke-linejoin="miter" d="M8.59,16.58L13.17,12L8.59,7.41L10,6L16,12L10,18L8.59,16.58Z"/>
<circle cx="909" cy="633.3" r="15.5" fill="rgba(0,0,0,0.28)"/>
<circle cx="909" cy="632.5" r="13.2" fill="#006073" stroke="#fff" stroke-width="2.4"/>
<path transform="translate(898.3 621.8) scale(0.8917)" fill="#d8fbff" stroke="#d8fbff" stroke-width="0.7" stroke-linejoin="miter" d="M8.59,16.58L13.17,12L8.59,7.41L10,6L16,12L10,18L8.59,16.58Z"/>
<circle cx="882.5" cy="659.8" r="15.5" fill="rgba(0,0,0,0.28)"/>
<circle cx="882.5" cy="659" r="13.2" fill="#006073" stroke="#fff" stroke-width="2.4"/>
<path transform="translate(871.8 648.3) scale(0.8917)" fill="#d8fbff" stroke="#d8fbff" stroke-width="0.7" stroke-linejoin="miter" d="M7.41,8.58L12,13.17L16.59,8.58L18,10L12,16L6,10L7.41,8.58Z"/>
<circle cx="988.5" cy="792.3" r="15.5" fill="rgba(0,0,0,0.28)"/>
<circle cx="988.5" cy="791.5" r="13.2" fill="#006073" stroke="#fff" stroke-width="2.4"/>
<path transform="translate(977.8 780.8) scale(0.8917)" fill="#d8fbff" stroke="#d8fbff" stroke-width="0.7" stroke-linejoin="miter" d="M8.59,16.58L13.17,12L8.59,7.41L10,6L16,12L10,18L8.59,16.58Z"/>
<circle cx="1253.5" cy="871.8" r="15.5" fill="rgba(0,0,0,0.28)"/>
<circle cx="1253.5" cy="871" r="13.2" fill="#006073" stroke="#fff" stroke-width="2.4"/>
<path transform="translate(1242.8 860.3) scale(0.8917)" fill="#d8fbff" stroke="#d8fbff" stroke-width="0.7" stroke-linejoin="miter" d="M7.41,15.41L12,10.83L16.59,15.41L18,14L12,8L6,14L7.41,15.41Z"/>
<circle cx="856" cy="898.3" r="15.5" fill="rgba(0,0,0,0.28)"/>
<circle cx="856" cy="897.5" r="13.2" fill="#006073" stroke="#fff" stroke-width="2.4"/>
<path transform="translate(845.3 886.8) scale(0.8917)" fill="#d8fbff" stroke="#d8fbff" stroke-width="0.7" stroke-linejoin="miter" d="M7.41,15.41L12,10.83L16.59,15.41L18,14L12,8L6,14L7.41,15.41Z"/>
<circle cx="379" cy="1004.3" r="15.5" fill="rgba(0,0,0,0.28)"/>
<circle cx="379" cy="1003.5" r="13.2" fill="#006073" stroke="#fff" stroke-width="2.4"/>
<path transform="translate(368.3 992.8) scale(0.8917)" fill="#d8fbff" stroke="#d8fbff" stroke-width="0.7" stroke-linejoin="miter" d="M7.41,8.58L12,13.17L16.59,8.58L18,10L12,16L6,10L7.41,8.58Z"/>
<circle cx="432" cy="1004.3" r="15.5" fill="rgba(0,0,0,0.28)"/>
<circle cx="432" cy="1003.5" r="13.2" fill="#006073" stroke="#fff" stroke-width="2.4"/>
<path transform="translate(421.3 992.8) scale(0.8917)" fill="#d8fbff" stroke="#d8fbff" stroke-width="0.7" stroke-linejoin="miter" d="M7.41,15.41L12,10.83L16.59,15.41L18,14L12,8L6,14L7.41,15.41Z"/>
<circle cx="591" cy="1004.3" r="15.5" fill="rgba(0,0,0,0.28)"/>
<circle cx="591" cy="1003.5" r="13.2" fill="#006073" stroke="#fff" stroke-width="2.4"/>
<path transform="translate(580.3 992.8) scale(0.8917)" fill="#d8fbff" stroke="#d8fbff" stroke-width="0.7" stroke-linejoin="miter" d="M7.41,8.58L12,13.17L16.59,8.58L18,10L12,16L6,10L7.41,8.58Z"/>
<circle cx="644" cy="1004.3" r="15.5" fill="rgba(0,0,0,0.28)"/>
<circle cx="644" cy="1003.5" r="13.2" fill="#006073" stroke="#fff" stroke-width="2.4"/>
<path transform="translate(633.3 992.8) scale(0.8917)" fill="#d8fbff" stroke="#d8fbff" stroke-width="0.7" stroke-linejoin="miter" d="M7.41,15.41L12,10.83L16.59,15.41L18,14L12,8L6,14L7.41,15.41Z"/>
<circle cx="803" cy="1004.3" r="15.5" fill="rgba(0,0,0,0.28)"/>
<circle cx="803" cy="1003.5" r="13.2" fill="#006073" stroke="#fff" stroke-width="2.4"/>
<path transform="translate(792.3 992.8) scale(0.8917)" fill="#d8fbff" stroke="#d8fbff" stroke-width="0.7" stroke-linejoin="miter" d="M7.41,8.58L12,13.17L16.59,8.58L18,10L12,16L6,10L7.41,8.58Z"/>
<circle cx="856" cy="1004.3" r="15.5" fill="rgba(0,0,0,0.28)"/>
<circle cx="856" cy="1003.5" r="13.2" fill="#006073" stroke="#fff" stroke-width="2.4"/>
<path transform="translate(845.3 992.8) scale(0.8917)" fill="#d8fbff" stroke="#d8fbff" stroke-width="0.7" stroke-linejoin="miter" d="M7.41,15.41L12,10.83L16.59,15.41L18,14L12,8L6,14L7.41,15.41Z"/>
<rect x="495" y="339.9" width="20.78" height="17" rx="3.5" fill="rgba(27,27,27,0.45)"/>
<text x="499.6" y="351.6" font-size="10.5" fill="#fff" font-weight="700" textLength="12.38" lengthAdjust="spacingAndGlyphs" stroke="#fff" stroke-width="0.3">12</text>
<rect x="548" y="339.9" width="20.78" height="17" rx="3.5" fill="rgba(27,27,27,0.45)"/>
<text x="552.6" y="351.6" font-size="10.5" fill="#fff" font-weight="700" textLength="12.38" lengthAdjust="spacingAndGlyphs" stroke="#fff" stroke-width="0.3">12</text>
<rect x="548" y="392.9" width="26.97" height="17" rx="3.5" fill="rgba(27,27,27,0.45)"/>
<text x="552.6" y="404.6" font-size="10.5" fill="#fff" font-weight="700" textLength="18.57" lengthAdjust="spacingAndGlyphs" stroke="#fff" stroke-width="0.3">297</text>
<rect x="707" y="339.9" width="20.78" height="17" rx="3.5" fill="rgba(27,27,27,0.45)"/>
<text x="711.6" y="351.6" font-size="10.5" fill="#fff" font-weight="700" textLength="12.38" lengthAdjust="spacingAndGlyphs" stroke="#fff" stroke-width="0.3">59</text>
<rect x="760" y="339.9" width="20.78" height="17" rx="3.5" fill="rgba(27,27,27,0.45)"/>
<text x="764.6" y="351.6" font-size="10.5" fill="#fff" font-weight="700" textLength="12.38" lengthAdjust="spacingAndGlyphs" stroke="#fff" stroke-width="0.3">59</text>
<rect x="919" y="313.4" width="26.97" height="17" rx="3.5" fill="rgba(27,27,27,0.45)"/>
<text x="923.6" y="325.1" font-size="10.5" fill="#fff" font-weight="700" textLength="18.57" lengthAdjust="spacingAndGlyphs" stroke="#fff" stroke-width="0.3">221</text>
<rect x="972" y="313.4" width="26.97" height="17" rx="3.5" fill="rgba(27,27,27,0.45)"/>
<text x="976.6" y="325.1" font-size="10.5" fill="#fff" font-weight="700" textLength="18.57" lengthAdjust="spacingAndGlyphs" stroke="#fff" stroke-width="0.3">221</text>
<rect x="919" y="366.4" width="20.78" height="17" rx="3.5" fill="rgba(27,27,27,0.45)"/>
<text x="923.6" y="378.1" font-size="10.5" fill="#fff" font-weight="700" textLength="12.38" lengthAdjust="spacingAndGlyphs" stroke="#fff" stroke-width="0.3">80</text>
<rect x="972" y="366.4" width="20.78" height="17" rx="3.5" fill="rgba(27,27,27,0.45)"/>
<text x="976.6" y="378.1" font-size="10.5" fill="#fff" font-weight="700" textLength="12.38" lengthAdjust="spacingAndGlyphs" stroke="#fff" stroke-width="0.3">80</text>
<rect x="813" y="419.4" width="26.97" height="17" rx="3.5" fill="rgba(27,27,27,0.45)"/>
<text x="817.6" y="431.1" font-size="10.5" fill="#fff" font-weight="700" textLength="18.57" lengthAdjust="spacingAndGlyphs" stroke="#fff" stroke-width="0.3">231</text>
<rect x="389" y="472.4" width="26.97" height="17" rx="3.5" fill="rgba(27,27,27,0.45)"/>
<text x="393.6" y="484.1" font-size="10.5" fill="#fff" font-weight="700" textLength="18.57" lengthAdjust="spacingAndGlyphs" stroke="#fff" stroke-width="0.3">297</text>
<rect x="442" y="472.4" width="26.97" height="17" rx="3.5" fill="rgba(27,27,27,0.45)"/>
<text x="446.6" y="484.1" font-size="10.5" fill="#fff" font-weight="700" textLength="18.57" lengthAdjust="spacingAndGlyphs" stroke="#fff" stroke-width="0.3">231</text>
<rect x="389" y="631.4" width="26.97" height="17" rx="3.5" fill="rgba(27,27,27,0.45)"/>
<text x="393.6" y="643.1" font-size="10.5" fill="#fff" font-weight="700" textLength="18.57" lengthAdjust="spacingAndGlyphs" stroke="#fff" stroke-width="0.3">144</text>
<rect x="442" y="684.4" width="26.97" height="17" rx="3.5" fill="rgba(27,27,27,0.45)"/>
<text x="446.6" y="696.1" font-size="10.5" fill="#fff" font-weight="700" textLength="18.57" lengthAdjust="spacingAndGlyphs" stroke="#fff" stroke-width="0.3">144</text>
<rect x="548" y="551.9" width="26.97" height="17" rx="3.5" fill="rgba(27,27,27,0.45)"/>
<text x="552.6" y="563.6" font-size="10.5" fill="#fff" font-weight="700" textLength="18.57" lengthAdjust="spacingAndGlyphs" stroke="#fff" stroke-width="0.3">279</text>
<rect x="707" y="551.9" width="26.97" height="17" rx="3.5" fill="rgba(27,27,27,0.45)"/>
<text x="711.6" y="563.6" font-size="10.5" fill="#fff" font-weight="700" textLength="18.57" lengthAdjust="spacingAndGlyphs" stroke="#fff" stroke-width="0.3">202</text>
<rect x="760" y="551.9" width="26.97" height="17" rx="3.5" fill="rgba(27,27,27,0.45)"/>
<text x="764.6" y="563.6" font-size="10.5" fill="#fff" font-weight="700" textLength="18.57" lengthAdjust="spacingAndGlyphs" stroke="#fff" stroke-width="0.3">202</text>
<rect x="601" y="631.4" width="26.97" height="17" rx="3.5" fill="rgba(27,27,27,0.45)"/>
<text x="605.6" y="643.1" font-size="10.5" fill="#fff" font-weight="700" textLength="18.57" lengthAdjust="spacingAndGlyphs" stroke="#fff" stroke-width="0.3">288</text>
<rect x="495" y="763.9" width="26.97" height="17" rx="3.5" fill="rgba(27,27,27,0.45)"/>
<text x="499.6" y="775.6" font-size="10.5" fill="#fff" font-weight="700" textLength="18.57" lengthAdjust="spacingAndGlyphs" stroke="#fff" stroke-width="0.3">279</text>
<rect x="601" y="869.9" width="26.97" height="17" rx="3.5" fill="rgba(27,27,27,0.45)"/>
<text x="605.6" y="881.6" font-size="10.5" fill="#fff" font-weight="700" textLength="18.57" lengthAdjust="spacingAndGlyphs" stroke="#fff" stroke-width="0.3">288</text>
<rect x="919" y="498.9" width="14.59" height="17" rx="3.5" fill="rgba(27,27,27,0.45)"/>
<text x="925" y="510.6" font-size="10.5" fill="#fff" font-weight="700" textLength="6.19" lengthAdjust="spacingAndGlyphs" stroke="#fff" stroke-width="0.3">3</text>
<rect x="1263.5" y="498.9" width="14.59" height="17" rx="3.5" fill="rgba(27,27,27,0.45)"/>
<text x="1269.5" y="510.6" font-size="10.5" fill="#fff" font-weight="700" textLength="6.19" lengthAdjust="spacingAndGlyphs" stroke="#fff" stroke-width="0.3">3</text>
</svg>
<div class="abs" style="left:1483.9px;top:261.8px;width:38.7px;height:79px;border-radius:19.4px;background:#262626"></div>
<svg class="ic" style="left:1492.1px;top:270.6px" width="22" height="22" viewBox="0 0 24 24" ><path fill="#d4d4d4" d="M19,13H13V19H11V13H5V11H11V5H13V11H19V13Z"/></svg>
<svg class="ic" style="left:1492.1px;top:309.9px" width="22" height="22" viewBox="0 0 24 24" ><path fill="#d4d4d4" d="M19,13H5V11H19V13Z"/></svg>
<div class="abs" style="left:1472.5px;top:960.1px;width:62px;height:62px;border-radius:31px;background:#c62127;box-shadow:0 2px 6px rgba(0,0,0,.5)"></div>
<svg class="ic" style="left:1490.5px;top:978.1px" width="26" height="26" viewBox="0 0 24 24" ><path fill="#fff" d="M19,13H13V19H11V13H5V11H11V5H13V11H19V13Z"/></svg>
<div class="abs" style="left:1543.2px;top:243.8px;width:6.6px;height:467.5px;border-radius:3.3px;background:rgba(255,255,255,0.35)"></div>
<div class="abs" style="left:1550.6px;top:74.5px;width:1.4px;height:945.5px;background:#111"></div>
</section>
</main>
<header>
<div class="abs topbar"></div>
<svg class="ic" style="left:20.7px;top:26.1px" width="27" height="27" viewBox="0 0 24 24" ><path fill="#fff" d="M3,6H21V8H3V6M3,11H21V13H3V11M3,16H21V18H3V16Z"/></svg>
<svg class="ic" style="left:60px;top:4px" width="200" height="70" viewBox="60 4 200 70" font-family="'Liberation Sans', Arial, sans-serif"><circle cx="99.7" cy="38.2" r="29.3" fill="#1a9fab"/><circle cx="115.6" cy="38.2" r="24.6" fill="#62bac4"/><circle cx="129.3" cy="38.2" r="20" fill="#93d1d8"/><text x="154.08" y="47.7" font-size="25.8" fill="#e0fafb" textLength="86.21" lengthAdjust="spacingAndGlyphs" stroke="#008c9e" stroke-width="0.15">RULE14</text><text x="240" y="31.8" font-size="8.2" fill="#e0fafb" textLength="6.4" lengthAdjust="spacingAndGlyphs" >®</text></svg>
<svg class="ic" style="left:1507.5px;top:25.6px" width="27.2" height="27.2" viewBox="0 0 24 24" ><path fill="#fff" d="M12,19.2C9.5,19.2 7.29,17.92 6,16C6.03,14 10,12.9 12,12.9C14,12.9 17.97,14 18,16C16.71,17.92 14.5,19.2 12,19.2M12,5A3,3 0 0,1 15,8A3,3 0 0,1 12,11A3,3 0 0,1 9,8A3,3 0 0,1 12,5M12,2A10,10 0 0,0 2,12A10,10 0 0,0 12,22A10,10 0 0,0 22,12C22,6.47 17.5,2 12,2Z"/></svg>
</header>
</div>
</body>
</html>
